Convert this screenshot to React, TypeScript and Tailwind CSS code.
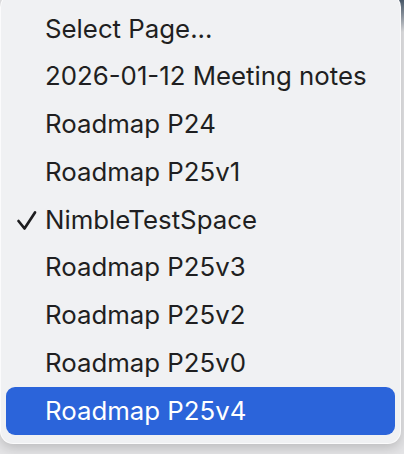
import React from "react";

const pages = [
  { id: "select", label: "Select Page..." },
  { id: "meeting", label: "2026-01-12 Meeting notes" },
  { id: "p24", label: "Roadmap P24" },
  { id: "p25v1", label: "Roadmap P25v1" },
  { id: "nimble", label: "NimbleTestSpace", checked: true },
  { id: "p25v3", label: "Roadmap P25v3" },
  { id: "p25v2", label: "Roadmap P25v2" },
  { id: "p25v0", label: "Roadmap P25v0" },
  { id: "p25v4", label: "Roadmap P25v4", active: true },
];

function Check() {
  return (
    <svg width="22" height="22" viewBox="0 0 22 22" className="absolute left-[9px] top-1/2 -translate-y-1/2">
      <path d="M3.5 12 L9.5 19.5 L20 3.5" fill="none" stroke="#1d1d1f" strokeWidth="2.7" strokeLinecap="round" strokeLinejoin="round" />
    </svg>
  );
}

export default function App() {
  return (
    <div className="relative w-[404px] h-[454px] overflow-hidden bg-[#e4e4e6] font-['Inter','Liberation_Sans',sans-serif]">
      <div className="absolute right-0 top-0 w-[30px] h-[32px] bg-gradient-to-b from-[#4b5b6c] to-[#e4e4e6]" />
      <div className="relative w-[401px] -mt-[6px] pt-[10px] pb-[8px] bg-[#f0f1f3] rounded-[13px] border border-white/70 shadow-[0_4px_12px_rgba(0,0,0,0.18)]">
        {pages.map((p) => (
          <div
            key={p.id}
            className={`relative mx-[5px] h-[47.75px] flex items-center pl-[39px] rounded-[9px] text-[25.8px] ${
              p.active ? "bg-[#2b64da] text-white" : "text-[#1f1f21]"
            }`}
          >
            {p.checked && <Check />}
            <span>{p.label}</span>
          </div>
        ))}
      </div>
    </div>
  );
}
